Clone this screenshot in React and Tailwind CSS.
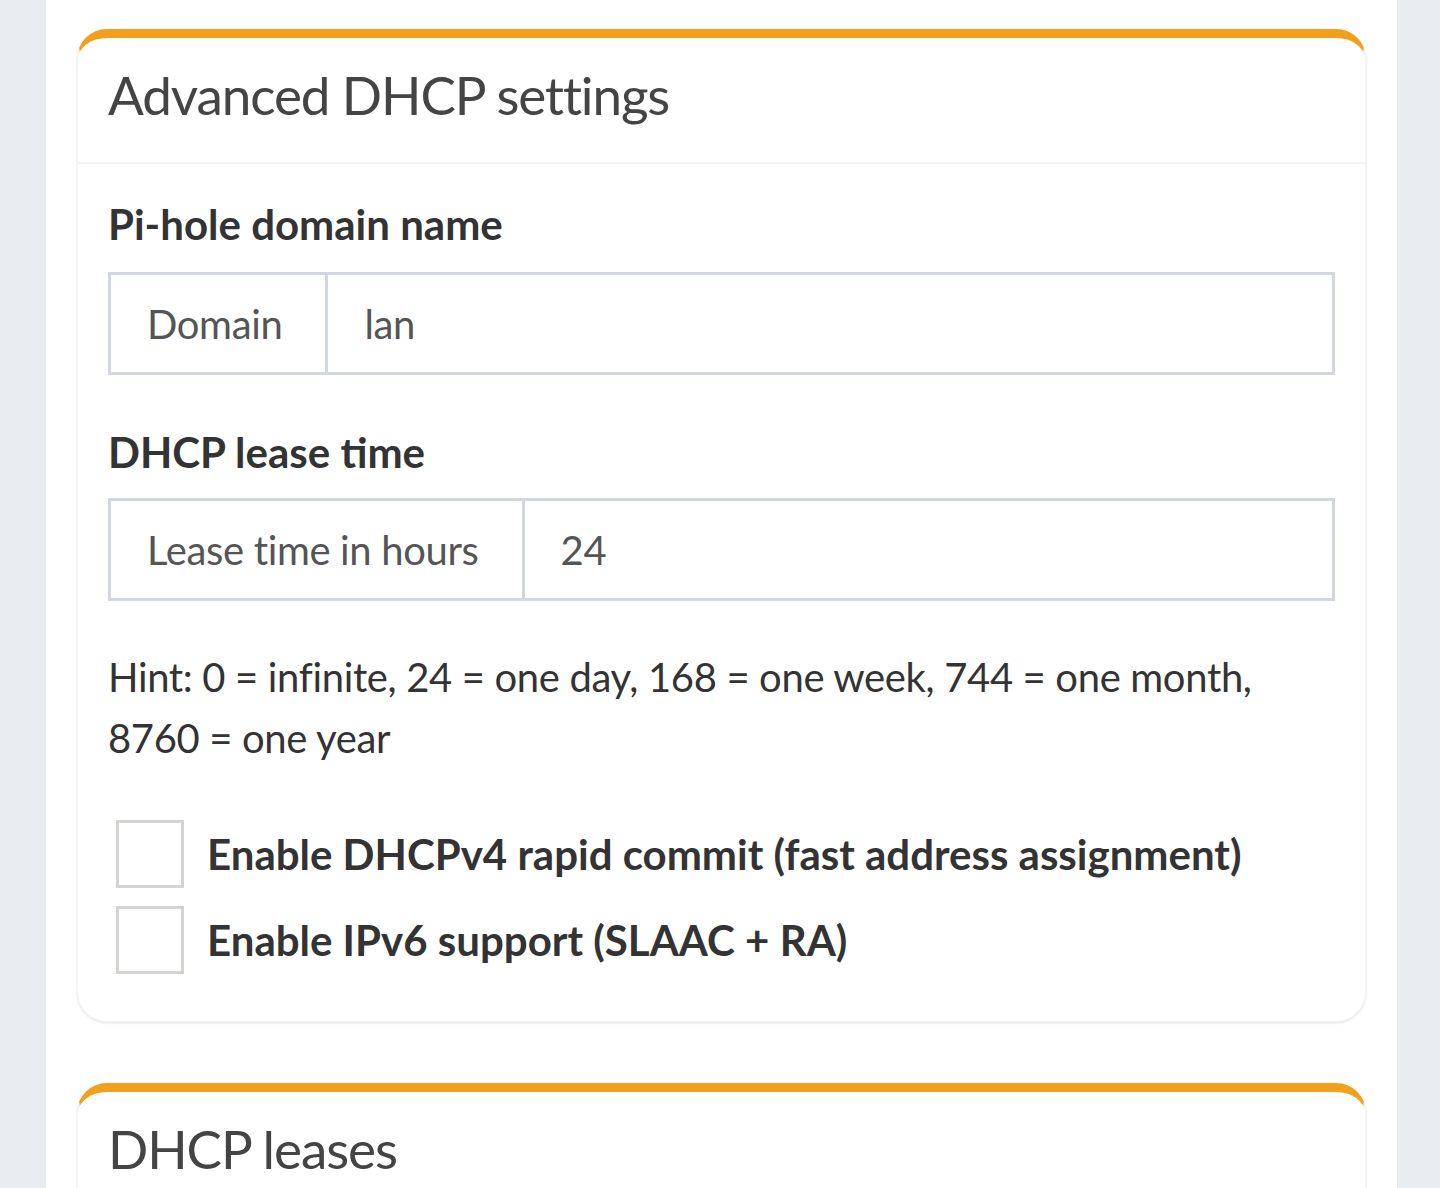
import React from 'react';

// Tarjeta con borde superior naranja (estilo AdminLTE)
function Tarjeta({ titulo, children }) {
  return (
    <div className="rounded-[30px] border border-[#f4f4f4] border-t-[9px] border-t-[#f29f1c] bg-white shadow-[0_1px_3px_rgba(0,0,0,0.12)]">
      <div className="h-[126px] border-b-2 border-[#f4f4f4] px-[30px] pt-[21px]">
        <h3 className="text-[53px] leading-[72px] font-normal tracking-[-1.1px] text-[#444]">{titulo}</h3>
      </div>
      {children}
    </div>
  );
}

function GrupoInput({ etiqueta, valor }) {
  return (
    <div className="flex h-[103px] border-[3px] border-[#d2d6de] text-[40px] tracking-[-0.35px] text-[#555]">
      <div className="flex items-center border-r-[3px] border-[#d2d6de] pl-[36px] pr-[43px]">{etiqueta}</div>
      <div className="flex flex-1 items-center px-[36px]">{valor}</div>
    </div>
  );
}

function Casilla({ texto }) {
  return (
    <div className="flex items-center gap-[23px] pl-[8px]">
      <span className="block h-[68px] w-[68px] border-[3px] border-[#d3d3cf] bg-white" />
      <span className="text-[42px] font-bold leading-[50px] text-[#333]">{texto}</span>
    </div>
  );
}

export default function App() {
  return (
    <div className="flex min-h-[1188px] bg-[#e9ecf0] font-['Lato',sans-serif]">
      <div className="w-[46px] shrink-0" />
      <div className="flex-1 bg-white px-[31px] pt-[29px]">
        <Tarjeta titulo="Advanced DHCP settings">
          <div className="px-[30px] pb-[47px]">
            <p className="mt-[35px] mb-[23px] text-[42px] font-bold leading-[50px] text-[#333]">Pi-hole domain name</p>
            <GrupoInput etiqueta="Domain" valor="lan" />

            <p className="mt-[52px] mb-[21px] text-[42px] font-bold leading-[50px] text-[#333]">DHCP lease time</p>
            <GrupoInput etiqueta="Lease time in hours" valor="24" />

            <p className="mt-[46px] text-[40px] leading-[61px] tracking-[-0.35px] text-[#333]">
              Hint: 0 = infinite, 24 = one day, 168 = one week, 744 = one month,
              <br />
              8760 = one year
            </p>

            <div className="mt-[51px] flex flex-col gap-[18px]">
              <Casilla texto="Enable DHCPv4 rapid commit (fast address assignment)" />
              <Casilla texto="Enable IPv6 support (SLAAC + RA)" />
            </div>
          </div>
        </Tarjeta>

        <div className="mt-[61px]">
          <Tarjeta titulo="DHCP leases">
            <div className="h-[200px]" />
          </Tarjeta>
        </div>
      </div>
      <div className="w-[43px] shrink-0" />
    </div>
  );
}
